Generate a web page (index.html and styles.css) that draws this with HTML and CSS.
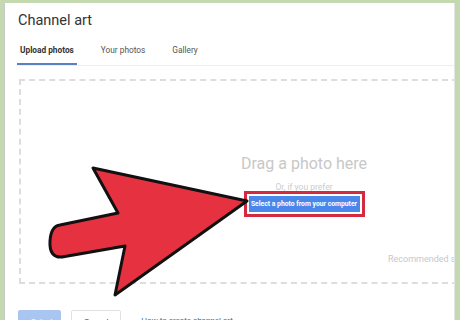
FILE: index.html
```html
<!DOCTYPE html>
<html lang="en">
<head>
    <meta charset="UTF-8">
    <title>Channel art</title>
    <link rel="stylesheet" href="styles.css">
</head>
<body>

    <div class="dialog">
        <h1 class="title">Channel art</h1>

        <!-- Tabs -->
        <div class="tabs">
            <span class="tab active">Upload photos</span>
            <span class="tab">Your photos</span>
            <span class="tab">Gallery</span>
        </div>

        <!-- Drop zone -->
        <div class="dropzone">
            <div class="drag-text">Drag a photo here</div>
            <div class="or-text">Or, if you prefer</div>
            <button class="select-btn">Select a photo from your computer</button>
            <div class="recommended">Recommended size: 2560 x 1440 pixels</div>
        </div>

        <div class="actions">
            <button class="btn primary">Select</button>
            <button class="btn">Cancel</button>
            <a href="#" class="help-link">How to create channel art</a>
        </div>
    </div>

    <!-- Pointer arrow -->
    <svg class="arrow" width="460" height="320" viewBox="0 0 460 320">
        <path d="M93 168 L247 201 L115 295 L125 246 L62 257 Q49 258 50 241 Q51 226 60 225 L118 213 Z"
              fill="#e63240" stroke="#111" stroke-width="3" stroke-linejoin="round"/>
    </svg>

</body>
</html>
```

FILE: styles.css
```css
body {
    margin: 0;
    background: #c5d9b1;
    font-family: Roboto, "Liberation Sans", sans-serif;
    width: 460px;
    height: 320px;
    overflow: hidden;
    position: relative;
}
.dialog {
    margin: 3px 0 0 4px;
    width: 449px;
    height: 317px;
    background: #fff;
    border-left: 1px solid #c9c9c9;
    border-right: 1px solid #e4e4e4;
    overflow: hidden;
}
.title {
    margin: 0;
    padding: 9px 0 0 13px;
    font-size: 14.5px;
    font-weight: normal;
    color: #333;
    height: 24px;
}
.tabs {
    display: flex;
    margin: 0 0 0 12px;
    border-bottom: 1px solid #eee;
    height: 29px;
    align-items: center;
}
.tab {
    font-size: 8.3px;
    color: #555;
    padding: 0 3px;
    margin-right: 21px;
    height: 29px;
    line-height: 29px;
    box-sizing: border-box;
}
.tab.active {
    font-weight: bold;
    color: #333;
    border-bottom: 2px solid #5b7fc4;
}
.dropzone {
    margin: 13px 0 0 14px;
    width: 570px;
    height: 205px;
    border: 2px dashed #ddd;
    box-sizing: border-box;
    display: flex;
    flex-direction: column;
    align-items: center;
}
.drag-text {
    margin-top: 73px;
    font-size: 16px;
    color: #c8c8c8;
}
.or-text {
    margin-top: 9px;
    font-size: 8.5px;
    color: #ccc;
}
.select-btn {
    margin-top: 4px;
    width: 111px;
    height: 16px;
    padding: 0;
    border: none;
    background: #4a87ea;
    color: #fff;
    font-family: inherit;
    font-size: 6.8px;
    font-weight: bold;
    outline: 3px solid #d32a40;
    outline-offset: 2px;
}
.recommended {
    align-self: flex-start;
    margin: 42px 0 0 367px;
    font-size: 9px;
    color: #c8c8c8;
    white-space: nowrap;
}
.actions {
    display: flex;
    align-items: flex-start;
    margin: 26px 0 0 13px;
}
.btn {
    height: 22px;
    padding: 0 12px;
    font-family: inherit;
    font-size: 8px;
    background: #fff;
    border: 1px solid #e2e2e2;
    border-radius: 2px;
    color: #444;
    margin-right: 10px;
}
.btn.primary {
    background: #a9c6f2;
    border-color: #a9c6f2;
    color: #fff;
    width: 43px;
}
.help-link {
    margin: 6px 0 0 10px;
    font-size: 8px;
    color: #3b64b5;
    text-decoration: none;
}
.arrow {
    position: absolute;
    left: 0;
    top: 0;
}
```
